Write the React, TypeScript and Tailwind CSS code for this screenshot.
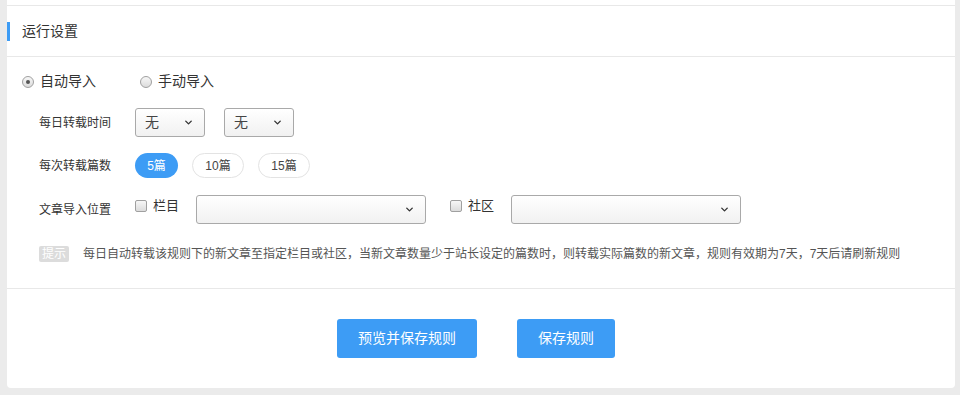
import { ChevronDown } from 'lucide-react'

const font = { fontFamily: '"Microsoft YaHei", "Liberation Sans", "Noto Sans CJK SC", sans-serif' }

function Select({ value, width }: { value?: string; width: string }) {
  return (
    <div
      className={`${width} h-[29px] flex items-center justify-between pl-[9px] pr-[10px] rounded-[3px] border border-[#a9a9a9] bg-gradient-to-b from-white to-[#f1f1f1] text-[14px] text-[#444]`}
    >
      <span>{value}</span>
      <ChevronDown className="w-[11px] h-[11px] text-[#333]" strokeWidth={3} />
    </div>
  )
}

function Checkbox({ label }: { label: string }) {
  return (
    <div className="flex items-center gap-[6px] -mt-[8px]">
      <span className="w-[12px] h-[12px] rounded-[2px] border border-[#a0a0a0] bg-gradient-to-b from-[#f7f7f7] to-[#dcdcdc]" />
      <span className="text-[13px] text-[#333]">{label}</span>
    </div>
  )
}

function Radio({ label, checked }: { label: string; checked?: boolean }) {
  return (
    <div className="flex items-center gap-[6px]">
      <span className="w-[12px] h-[12px] rounded-full border border-[#a0a0a0] bg-gradient-to-b from-[#f7f7f7] to-[#dcdcdc] flex items-center justify-center">
        {checked && <span className="w-[4px] h-[4px] rounded-full bg-[#555]" />}
      </span>
      <span className="text-[14px] text-[#333]">{label}</span>
    </div>
  )
}

export default function App() {
  const counts = ['5篇', '10篇', '15篇']

  return (
    <div className="w-[960px] h-[395px] bg-[#ebebeb] pl-[7px] pr-[5px]" style={font}>
      <div className="bg-white rounded-b-[4px] h-[388px] pt-[5px] flex flex-col">
        <div className="border-t border-[#e8e8e8] h-[51px] flex items-center">
          <span className="w-[3px] h-[19px] bg-[#3d9cf5]" />
          <span className="ml-[12px] text-[14px] text-[#333]">运行设置</span>
        </div>

        <div className="border-t border-[#e8e8e8] flex flex-col pt-[14px] h-[232px]">
          <div className="flex items-center pl-[15px] gap-[44px]">
            <Radio label="自动导入" checked />
            <Radio label="手动导入" />
          </div>

          <div className="flex items-center pl-[32px] mt-[16px]">
            <span className="w-[96px] text-[12px] text-[#333]">每日转载时间</span>
            <div className="flex gap-[19px]">
              <Select value="无" width="w-[70px]" />
              <Select value="无" width="w-[70px]" />
            </div>
          </div>

          <div className="flex items-center pl-[32px] mt-[16px]">
            <span className="w-[96px] text-[12px] text-[#333]">每次转载篇数</span>
            <div className="flex gap-[14px]">
              {counts.map((c, i) => (
                <span
                  key={c}
                  className={`h-[25px] flex items-center justify-center rounded-full text-[12px] ${
                    i === 0
                      ? 'w-[43px] bg-[#3d9cf5] text-white'
                      : 'w-[52px] border border-[#e3e3e3] text-[#444]'
                  }`}
                >
                  {c}
                </span>
              ))}
            </div>
          </div>

          <div className="flex items-center pl-[32px] mt-[17px]">
            <span className="w-[96px] text-[12px] text-[#333]">文章导入位置</span>
            <Checkbox label="栏目" />
            <div className="ml-[17px]">
              <Select width="w-[230px]" />
            </div>
            <div className="ml-[24px]">
              <Checkbox label="社区" />
            </div>
            <div className="ml-[17px]">
              <Select width="w-[230px]" />
            </div>
          </div>

          <div className="flex items-center pl-[32px] mt-[21px]">
            <span className="w-[30px] h-[16px] bg-[#dcdcdc] text-white text-[12px] flex items-center justify-center rounded-[2px]">
              提示
            </span>
            <span className="ml-[14px] text-[12px] text-[#555]">
              每日自动转载该规则下的新文章至指定栏目或社区，当新文章数量少于站长设定的篇数时，则转载实际篇数的新文章，规则有效期为7天，7天后请刷新规则
            </span>
          </div>
        </div>

        <div className="border-t border-[#e8e8e8] flex justify-center gap-[40px] pt-[30px] pr-[10px]">
          <button className="w-[140px] h-[39px] rounded-[3px] bg-[#3d9cf5] text-white text-[14px]">
            预览并保存规则
          </button>
          <button className="w-[98px] h-[39px] rounded-[3px] bg-[#3d9cf5] text-white text-[14px]">
            保存规则
          </button>
        </div>
      </div>
    </div>
  )
}
